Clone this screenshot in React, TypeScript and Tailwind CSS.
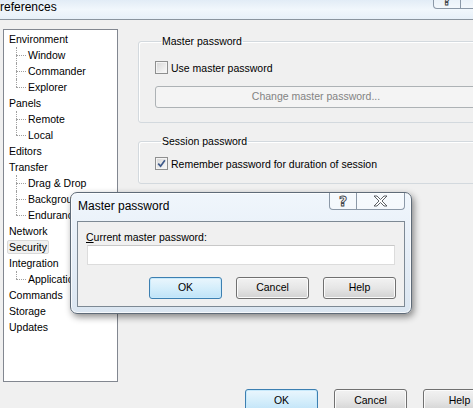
import React from "react";

type Item = { t: string; c?: string[]; sel?: boolean };

const tree: Item[] = [
  { t: "Environment", c: ["Window", "Commander", "Explorer"] },
  { t: "Panels", c: ["Remote", "Local"] },
  { t: "Editors" },
  { t: "Transfer", c: ["Drag & Drop", "Background", "Endurance"] },
  { t: "Network" },
  { t: "Security", sel: true },
  { t: "Integration", c: ["Application"] },
  { t: "Commands" },
  { t: "Storage" },
  { t: "Updates" },
];

function Check({ checked }: { checked?: boolean }) {
  return (
    <span className="w-[13px] h-[13px] shrink-0 border border-[#8e8f8f] bg-gradient-to-br from-[#d6d6d6] to-[#fbfbfb] shadow-[inset_0_0_0_1px_#f4f4f4] flex items-center justify-center">
      {checked && (
        <svg width="9" height="9" viewBox="0 0 9 9">
          <path d="M1.2 4.6 L3.6 7.2 L7.9 1.2" fill="none" stroke="#3f5a8a" strokeWidth="1.7" />
        </svg>
      )}
    </span>
  );
}

function Btn({ label, def, w = "w-[73px]", h = "h-[22px]" }: { label: string; def?: boolean; w?: string; h?: string }) {
  return (
    <div
      className={`${w} ${h} shrink-0 rounded-[3px] border flex items-center justify-center ${
        def
          ? "border-[#3c7fb1] bg-gradient-to-b from-[#eaf6fd] via-[#d5eefb] to-[#bfe3f8] shadow-[inset_0_0_0_1px_#c7e9fb]"
          : "border-[#707070] bg-gradient-to-b from-[#f2f2f2] via-[#e6e6e6] to-[#d2d2d2] shadow-[inset_0_0_0_1px_#fbfbfb]"
      }`}
    >
      {label}
    </div>
  );
}

function XGlyph() {
  return (
    <svg width="15" height="12" viewBox="-1 -1 15 12">
      <path
        d="M0 0 H3 L6.5 3.5 L10 0 H13 L8 5 L13 10 H10 L6.5 6.5 L3 10 H0 L5 5 Z"
        fill="#ffffff"
        stroke="#4b4f55"
        strokeWidth="0.9"
        strokeLinejoin="round"
      />
    </svg>
  );
}

function QGlyph() {
  return (
    <span className="text-[14px] leading-none font-bold text-white [-webkit-text-stroke:0.9px_#3e4349] font-['DejaVu_Sans',sans-serif]">
      ?
    </span>
  );
}

function Tree() {
  return (
    <div className="ml-[3px] mt-[9px] w-[115px] h-[353px] shrink-0 border border-[#828790] bg-white pt-px">
      {tree.map((it) => (
        <div key={it.t}>
          <div className="h-4 flex items-center pl-[3px]">
            <span
              className={`px-px leading-[12px] border rounded-[2px] whitespace-nowrap ${
                it.sel ? "border-[#d9d9d9] bg-[#f0f0f0]" : "border-transparent"
              }`}
            >
              {it.t}
            </span>
          </div>
          {it.c?.map((c, i) => {
            const last = i === it.c!.length - 1;
            return (
              <div key={c} className="h-4 relative flex items-center pl-[24px] whitespace-nowrap">
                <span
                  className={`absolute left-[12px] top-0 border-l border-dotted border-[#a0a0a0] ${
                    last ? "h-[8px]" : "h-4"
                  }`}
                />
                <span className="absolute left-[12px] top-[8px] w-[10px] border-t border-dotted border-[#a0a0a0]" />
                <span className="leading-[12px]">{c}</span>
              </div>
            );
          })}
        </div>
      ))}
    </div>
  );
}

export default function App() {
  return (
    <div className="relative w-[473px] h-[408px] overflow-hidden bg-[#f0f0f0] text-black text-[10.5px] font-['Liberation_Sans',Arial,sans-serif]">
      {/* background window title bar */}
      <div className="h-[20px] flex items-start border-b border-[#8a949e] bg-gradient-to-b from-[#e2ecf6] via-[#f1f7fc] to-[#e7f0f8]">
        <span className="text-[12px] leading-[12px] pt-px whitespace-nowrap">references</span>
        <div className="ml-auto mr-[-36px] -mt-[9px] h-[18px] flex shrink-0 border-x border-b border-[#8b98a7] rounded-b-[4px] bg-white/30">
          <div className="w-[27px] border-r border-[#8b98a7] flex items-end justify-center pb-[1px]">
            <QGlyph />
          </div>
          <div className="w-[47px]" />
        </div>
      </div>

      {/* body */}
      <div className="flex flex-col">
        <div className="flex">
          <Tree />
          <div className="ml-[20px] pt-[15px] flex flex-col shrink-0">
            <fieldset className="w-[345px] border border-[#d3d9de] rounded-[3px] pl-[16px] pt-[14px] pb-[14px] shadow-[inset_1px_1px_0_#ffffff]">
              <legend className="ml-[6px] px-px leading-[12px]">Master password</legend>
              <div className="h-[13px] flex items-center gap-[3px]">
                <Check />
                <span className="leading-[12px]">Use master password</span>
              </div>
              <div className="mt-[12px] w-[322px] h-[22px] rounded-[3px] border border-[#adb2b5] bg-[#f4f4f4] text-[#838383] flex items-center justify-center">
                Change master password...
              </div>
            </fieldset>
            <fieldset className="mt-[12px] w-[345px] border border-[#d3d9de] rounded-[3px] pl-[16px] pt-[10px] pb-[13px] shadow-[inset_1px_1px_0_#ffffff]">
              <legend className="ml-[6px] px-px leading-[12px]">Session password</legend>
              <div className="h-[13px] flex items-center gap-[3px]">
                <Check checked />
                <span className="leading-[12px]">Remember password for duration of session</span>
              </div>
            </fieldset>
          </div>
        </div>
        <div className="mt-[7px] ml-[245px] flex gap-[16px]">
          <Btn label="OK" def h="h-[23px]" />
          <Btn label="Cancel" h="h-[23px]" />
          <Btn label="Help" h="h-[23px]" />
        </div>
      </div>

      {/* modal dialog */}
      <div className="absolute left-[70px] top-[192px] w-[342px] h-[122px] rounded-[7px] border border-[#5f6b78] bg-gradient-to-b from-[#f0f6fc] via-[#e6eef7] to-[#dbe6f1] shadow-[2px_3px_7px_rgba(0,0,0,0.45),inset_0_0_0_1px_rgba(255,255,255,0.75)] flex flex-col px-[6px] pb-[6px]">
        <div className="h-[28px] flex items-start shrink-0">
          <span className="mt-[7px] pl-px text-[12px] leading-[12px] whitespace-nowrap">Master password</span>
          <div className="ml-auto h-[17px] flex border-x border-b border-[#8b98a7] rounded-b-[4px] bg-white/40">
            <div className="w-[27px] border-r border-[#8b98a7] flex items-center justify-center">
              <QGlyph />
            </div>
            <div className="w-[47px] flex items-center justify-center">
              <XGlyph />
            </div>
          </div>
        </div>
        <div className="flex-1 border border-[#7d8994] bg-[#f0f0f0] flex flex-col">
          <div className="pl-[8px] pt-[9px] leading-[12px] whitespace-nowrap">
            <span className="underline underline-offset-[1px]">C</span>urrent master password:
          </div>
          <div className="mt-[2px] ml-[9px] w-[308px] h-[20px] bg-white border border-[#dcdcdc] border-t-[#c8c8c8]" />
          <div className="mt-[12px] flex justify-end gap-[14px] pr-[8px]">
            <Btn label="OK" def />
            <Btn label="Cancel" />
            <Btn label="Help" />
          </div>
        </div>
      </div>
    </div>
  );
}
